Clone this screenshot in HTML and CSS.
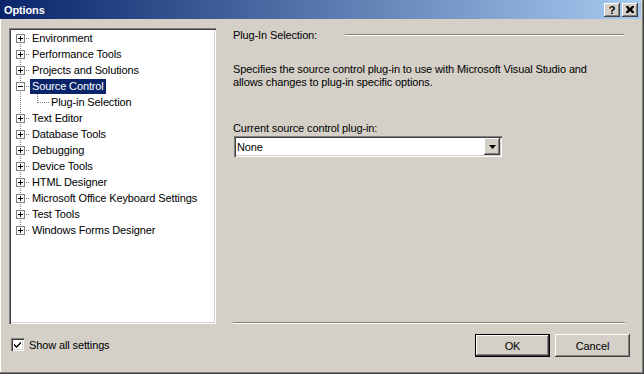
FILE: index.html
```html
<!DOCTYPE html>
<html lang="en">
<head>
    <meta charset="UTF-8">
    <meta name="viewport" content="width=device-width, initial-scale=1.0">
    <link rel="stylesheet" href="styles.css">
</head>
<body>
    <div class="window">
        <div class="titlebar">
            <span class="title">Options</span>
            <div class="caption-btns">
                <span class="cap-btn help">?</span>
                <span class="cap-btn">
                    <svg width="8" height="7" viewBox="0 0 8 7"><path d="M0 0h2l2 2 2-2h2v1L6 3.5 8 6v1H6L4 5 2 7H0V6l2-2.5L0 1z" fill="#000"/></svg>
                </span>
            </div>
        </div>

        <div class="content">
            <div class="tree">
                <ul class="nodes">
                    <li class="node"><span class="exp"></span><span class="hline"></span><span class="label">Environment</span></li>
                    <li class="node"><span class="exp"></span><span class="hline"></span><span class="label">Performance Tools</span></li>
                    <li class="node"><span class="exp"></span><span class="hline"></span><span class="label">Projects and Solutions</span></li>
                    <li class="node"><span class="exp minus"></span><span class="hline"></span><span class="label selected">Source Control</span></li>
                    <li class="node"><span class="elbow"></span><span class="label">Plug-in Selection</span></li>
                    <li class="node"><span class="exp"></span><span class="hline"></span><span class="label">Text Editor</span></li>
                    <li class="node"><span class="exp"></span><span class="hline"></span><span class="label">Database Tools</span></li>
                    <li class="node"><span class="exp"></span><span class="hline"></span><span class="label">Debugging</span></li>
                    <li class="node"><span class="exp"></span><span class="hline"></span><span class="label">Device Tools</span></li>
                    <li class="node"><span class="exp"></span><span class="hline"></span><span class="label">HTML Designer</span></li>
                    <li class="node"><span class="exp"></span><span class="hline"></span><span class="label">Microsoft Office Keyboard Settings</span></li>
                    <li class="node"><span class="exp"></span><span class="hline"></span><span class="label">Test Tools</span></li>
                    <li class="node"><span class="exp"></span><span class="hline"></span><span class="label">Windows Forms Designer</span></li>
                </ul>
            </div>

            <div class="panel">
                <div class="group-head">
                    <span>Plug-In Selection:</span>
                    <span class="etch"></span>
                </div>
                <p class="desc">Specifies the source control plug-in to use with Microsoft Visual Studio and allows changes to plug-in specific options.</p>
                <div class="field-label">Current source control plug-in:</div>
                <div class="combo">
                    <span class="combo-text">None</span>
                    <span class="combo-btn">
                        <svg width="7" height="4" viewBox="0 0 7 4"><path d="M0 0h7L3.5 4z" fill="#000"/></svg>
                    </span>
                </div>
                <div class="etch bottom-etch"></div>
            </div>

            <div class="show-all">
                <span class="check">
                    <svg width="9" height="9" viewBox="0 0 9 9"><path d="M1 3.5l2.5 2.5L8 1.5v2L3.5 8 1 5.5z" fill="#000"/></svg>
                </span>
                <span>Show all settings</span>
            </div>

            <div class="buttons">
                <button class="btn default">OK</button>
                <button class="btn">Cancel</button>
            </div>
        </div>
    </div>
</body>
</html>
```

FILE: styles.css
```css
body {
    margin: 0;
    font-family: "Liberation Sans", Arial, sans-serif;
    font-size: 11px;
    letter-spacing: -0.12px;
    color: #000;
}
.window {
    width: 644px;
    height: 374px;
    box-sizing: border-box;
    background: #d4d0c8;
    border-right: 1px solid #404040;
    border-bottom: 1px solid #404040;
    padding-right: 2px;
    padding-bottom: 2px;
    box-shadow: inset -1px -1px #808080, inset 1px 1px #fff;
    display: flex;
    flex-direction: column;
}

/* title bar */
.titlebar {
    height: 19px;
    flex-shrink: 0;
    background: linear-gradient(to right, #0a246a, #a6caf0);
    display: flex;
    align-items: center;
    justify-content: space-between;
    padding: 0 3px 0 4px;
}
.title {
    color: #fff;
    font-weight: bold;
    font-size: 11px;
}
.caption-btns {
    display: flex;
    gap: 2px;
}
.cap-btn {
    width: 16px;
    height: 14px;
    box-sizing: border-box;
    background: #d4d0c8;
    box-shadow: inset -1px -1px #404040, inset 1px 1px #fff, inset -2px -2px #808080;
    display: flex;
    align-items: center;
    justify-content: center;
}
.cap-btn.help {
    font-weight: bold;
    font-size: 11px;
    line-height: 14px;
}

/* main area */
.content {
    flex: 1;
    display: grid;
    grid-template-columns: 207px 1fr;
    grid-template-rows: 296px 1fr;
    column-gap: 17px;
    padding: 9px 11px 0 9px;
}

/* tree */
.tree {
    background: #fff;
    box-shadow: inset 1px 1px #808080, inset 2px 2px #404040, inset -1px -1px #fff, inset -2px -2px #d4d0c8;
    padding: 2px;
    box-sizing: border-box;
}
.nodes {
    list-style: none;
    margin: 0;
    padding: 0;
    background-image: repeating-linear-gradient(to bottom, #808080 0 1px, transparent 1px 2px);
    background-size: 1px 192px;
    background-position: 9px 8px;
    background-repeat: no-repeat;
}
.node {
    height: 16px;
    display: flex;
    align-items: center;
}
.exp {
    width: 9px;
    height: 9px;
    margin-left: 5px;
    box-sizing: border-box;
    border: 1px solid #808080;
    background:
        linear-gradient(#000, #000) center / 5px 1px no-repeat,
        linear-gradient(#000, #000) center / 1px 5px no-repeat,
        #fff;
}
.exp.minus {
    background:
        linear-gradient(#000, #000) center / 5px 1px no-repeat,
        #fff;
}
.hline {
    width: 5px;
    height: 1px;
    background: repeating-linear-gradient(to right, transparent 0 1px, #808080 1px 2px);
}
.elbow {
    width: 11px;
    height: 8px;
    margin-left: 26px;
    align-self: flex-start;
    border-left: 1px dotted #808080;
    border-bottom: 1px dotted #808080;
}
.label {
    padding: 0 2px;
    line-height: 15px;
    white-space: nowrap;
}
.label.selected {
    background: #0a246a;
    color: #fff;
}

/* right panel */
.panel {
    display: flex;
    flex-direction: column;
}
.group-head {
    display: flex;
    align-items: center;
    height: 14px;
}
.etch {
    border-top: 1px solid #808080;
    border-bottom: 1px solid #fff;
    height: 0;
}
.group-head .etch {
    flex: 1;
    margin-left: 28px;
    margin-right: 6px;
}
.desc {
    margin: 21px 0 0;
    line-height: 13px;
    max-width: 375px;
}
.field-label {
    margin-top: 33px;
    line-height: 13px;
}
.combo {
    margin: 1px 0 0 1px;
    width: 268px;
    height: 21px;
    box-sizing: border-box;
    background: #fff;
    box-shadow: inset 1px 1px #808080, inset 2px 2px #404040, inset -1px -1px #fff, inset -2px -2px #d4d0c8;
    display: flex;
    align-items: center;
    justify-content: space-between;
    padding: 2px;
}
.combo-text {
    padding-left: 1px;
}
.combo-btn {
    width: 16px;
    height: 17px;
    background: #d4d0c8;
    box-shadow: inset -1px -1px #404040, inset 1px 1px #fff, inset -2px -2px #808080;
    display: flex;
    align-items: center;
    justify-content: center;
}
.bottom-etch {
    margin-top: auto;
    margin-right: 5px;
}

/* bottom row */
.show-all {
    display: flex;
    align-items: center;
    gap: 5px;
    margin: 14px 0 0 2px;
    align-self: start;
}
.check {
    width: 13px;
    height: 13px;
    background: #fff;
    box-shadow: inset 1px 1px #808080, inset 2px 2px #404040, inset -1px -1px #fff, inset -2px -2px #d4d0c8;
    display: flex;
    align-items: center;
    justify-content: center;
}
.buttons {
    display: flex;
    justify-content: flex-end;
    gap: 5px;
    margin-top: 10px;
    align-self: start;
}
.btn {
    width: 75px;
    height: 23px;
    border: none;
    background: #d4d0c8;
    font-family: inherit;
    font-size: 11px;
    letter-spacing: inherit;
    color: #000;
    padding: 0;
    box-shadow: inset -1px -1px #404040, inset 1px 1px #fff, inset -2px -2px #808080;
}
.btn.default {
    box-shadow: inset 0 0 0 1px #000, inset -2px -2px #404040, inset 2px 2px #fff, inset -3px -3px #808080;
}
```
